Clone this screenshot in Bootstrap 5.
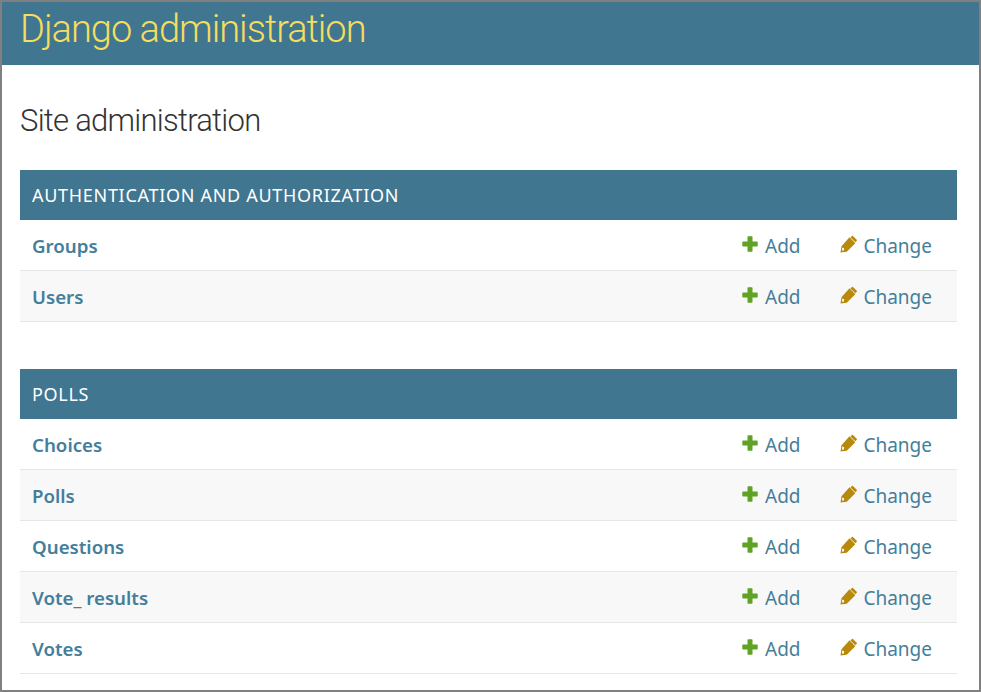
<!DOCTYPE html>
<html lang="en">
<head>
<meta charset="utf-8">
<title>Site administration</title>
<link href="https://cdn.jsdelivr.net/npm/bootstrap@5.3.0/dist/css/bootstrap.min.css" rel="stylesheet">
<style>
html, body { height: 100%; }
body { font-family: "Noto Sans", "Open Sans", sans-serif; background: #fff; overflow: hidden; }
.frame-box { height: 692px; border: 2px solid #808080; overflow: hidden; background: #fff; }
.site-head { height: 63px; background: #417690; padding: 0 18px; }
.site-title { font-family: Roboto, sans-serif; font-size: 38px; font-weight: 300; color: #f5dd5d; line-height: 54px; margin: 0; letter-spacing: -1px; }
.main-area { padding: 36px 22px 0 18px; }
.page-title { font-family: Roboto, sans-serif; font-size: 31px; font-weight: 300; color: #333; line-height: 40px; margin: 0 0 29px; letter-spacing: -.75px; }
.app-box { margin-bottom: 47px; }
.app-cap { height: 50px; background: #417690; color: #fff; font-size: 18px; line-height: 50px; padding: 0 12px; letter-spacing: .7px; }
.app-row { height: 51px; border-bottom: 1px solid #e6e6e6; padding: 2px 25px 0 12px; font-size: 19px; line-height: 48px; }
.app-row:nth-child(odd) { background: #f8f8f8; }
.app-row a { color: #447e9b; text-decoration: none; }
.model-name { font-weight: 600; font-size: 18.7px; }
.act-add { width: 98px; gap: 7px; }
.act-chg { width: 92px; gap: 6px; }
.act-add svg { width: 16px; height: 16px; margin-top: -5px; }
.act-chg svg { width: 18px; height: 18px; margin-top: -5px; }
</style>
</head>
<body>
<svg width="0" height="0" class="d-none">
  <symbol id="ic-plus" viewBox="0 0 16 16"><path fill="#5fa225" d="M5.500 1q0-.7.7-.7h3.600q.7 0 .7.7v4.500H15q.7 0 .7.7v3.600q0 .7-.7.7h-4.500V15q0 .7-.7.7H6.200q-.7 0-.7-.7v-4.500H1q-.7 0-.7-.7V6.200q0-.7.7-.7h4.500z"/></symbol>
  <symbol id="ic-pencil" viewBox="0 0 18 18"><path fill="#b88a0b" fill-rule="evenodd" d="M13.400.7l3.900 3.900q.5.6 0 1.100l-1.500 1.500-5-5 1.500-1.500q.6-.5 1.100 0zM9.800 2.100l6 6-8.800 8.800-6.500 1 1-6.500zM2.400 12.500l-.5 3 1.200.5.800-.4.400-2.100-1.900-1z"/></symbol>
</svg>
<div class="frame-box">
  <header class="site-head"><h1 class="site-title">Django administration</h1></header>
  <main class="main-area">
    <h2 class="page-title">Site administration</h2>

    <section class="app-box">
      <div class="app-cap">AUTHENTICATION AND AUTHORIZATION</div>
      <div class="app-row d-flex align-items-center">
        <a class="model-name flex-grow-1" href="#">Groups</a>
        <a class="act-add d-flex align-items-center" href="#"><svg><use href="#ic-plus"/></svg>Add</a>
        <a class="act-chg d-flex align-items-center" href="#"><svg><use href="#ic-pencil"/></svg>Change</a>
      </div>
      <div class="app-row d-flex align-items-center">
        <a class="model-name flex-grow-1" href="#">Users</a>
        <a class="act-add d-flex align-items-center" href="#"><svg><use href="#ic-plus"/></svg>Add</a>
        <a class="act-chg d-flex align-items-center" href="#"><svg><use href="#ic-pencil"/></svg>Change</a>
      </div>
    </section>

    <section class="app-box">
      <div class="app-cap">POLLS</div>
      <div class="app-row d-flex align-items-center">
        <a class="model-name flex-grow-1" href="#">Choices</a>
        <a class="act-add d-flex align-items-center" href="#"><svg><use href="#ic-plus"/></svg>Add</a>
        <a class="act-chg d-flex align-items-center" href="#"><svg><use href="#ic-pencil"/></svg>Change</a>
      </div>
      <div class="app-row d-flex align-items-center">
        <a class="model-name flex-grow-1" href="#">Polls</a>
        <a class="act-add d-flex align-items-center" href="#"><svg><use href="#ic-plus"/></svg>Add</a>
        <a class="act-chg d-flex align-items-center" href="#"><svg><use href="#ic-pencil"/></svg>Change</a>
      </div>
      <div class="app-row d-flex align-items-center">
        <a class="model-name flex-grow-1" href="#">Questions</a>
        <a class="act-add d-flex align-items-center" href="#"><svg><use href="#ic-plus"/></svg>Add</a>
        <a class="act-chg d-flex align-items-center" href="#"><svg><use href="#ic-pencil"/></svg>Change</a>
      </div>
      <div class="app-row d-flex align-items-center">
        <a class="model-name flex-grow-1" href="#">Vote_ results</a>
        <a class="act-add d-flex align-items-center" href="#"><svg><use href="#ic-plus"/></svg>Add</a>
        <a class="act-chg d-flex align-items-center" href="#"><svg><use href="#ic-pencil"/></svg>Change</a>
      </div>
      <div class="app-row d-flex align-items-center">
        <a class="model-name flex-grow-1" href="#">Votes</a>
        <a class="act-add d-flex align-items-center" href="#"><svg><use href="#ic-plus"/></svg>Add</a>
        <a class="act-chg d-flex align-items-center" href="#"><svg><use href="#ic-pencil"/></svg>Change</a>
      </div>
    </section>
  </main>
</div>
<script src="https://cdn.jsdelivr.net/npm/bootstrap@5.3.0/dist/js/bootstrap.bundle.min.js"></script>
</body>
</html>
